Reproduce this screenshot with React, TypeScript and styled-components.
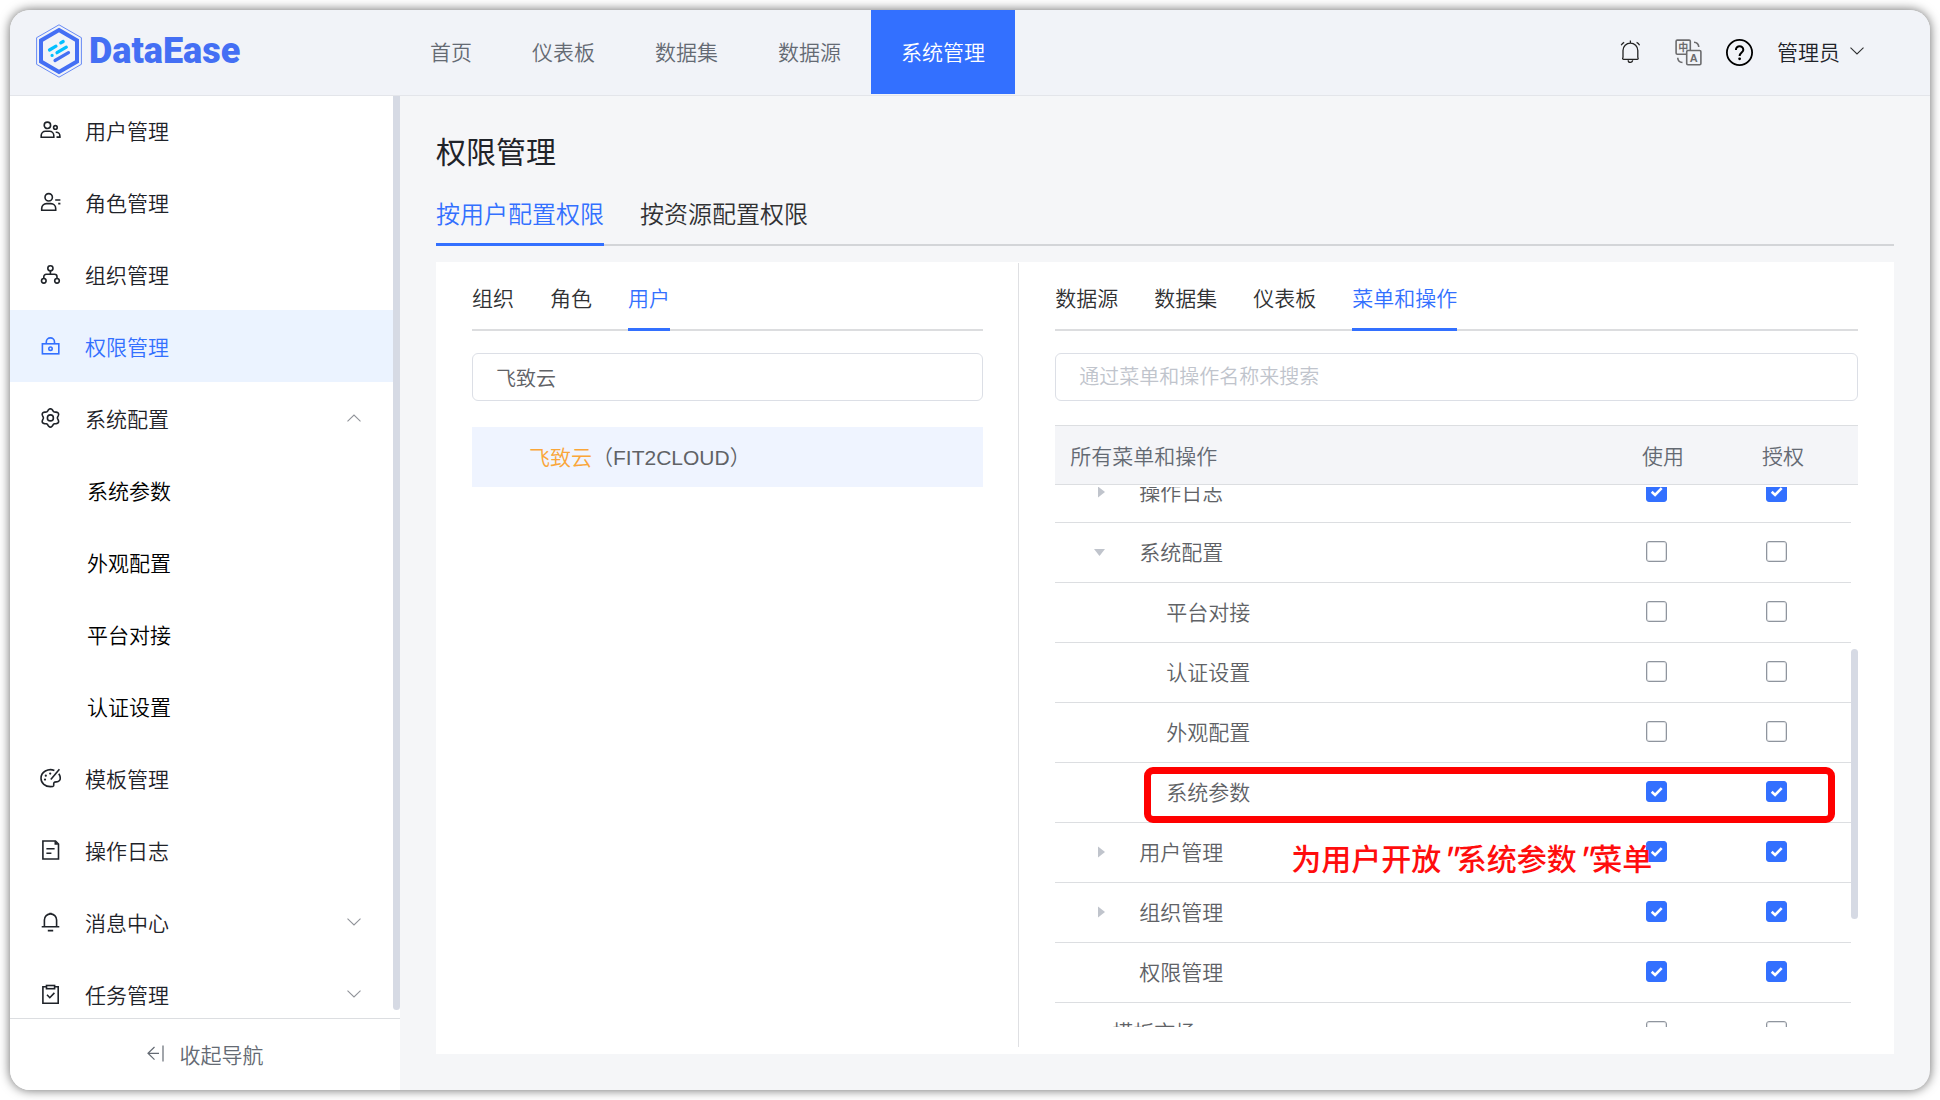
import React, { useLayoutEffect, useRef } from 'react';
import styled, { createGlobalStyle, css } from 'styled-components';

const blue = '#3370ff';

const GlobalStyle = createGlobalStyle`
  *, *::before, *::after { box-sizing: border-box; }
  body {
    margin: 0;
    background: #fff;
    font-family: "Liberation Sans", "Noto Sans CJK SC", sans-serif;
    font-size: 21px;
    font-weight: 350;
    color: #1f2329;
  }
  button, input { font: inherit; }
  button { margin: 0; padding: 0; border: 0; background: none; color: inherit; cursor: pointer; }
  a { color: inherit; text-decoration: none; }
  h1 { margin: 0; }
`;

const Page = styled.div`
  height: 100vh;
  padding: 10px;
`;

const Shell = styled.div`
  display: flex;
  flex-direction: column;
  height: 100%;
  overflow: hidden;
  border-radius: 20px;
  background: #f5f6f8;
  box-shadow: 0 0 11px rgba(0, 0, 0, 0.6);
`;

/* ---------- header ---------- */

const Header = styled.header`
  display: flex;
  flex: none;
  height: 86px;
  padding-bottom: 1px;
  background: #f1f3f8;
  border-bottom: 1px solid #e3e5ea;
`;

const Brand = styled.a`
  display: flex;
  align-items: center;
  gap: 7px;
  width: 390px;
  padding: 0 0 2px 26px;
  color: #446ff4;
  font-family: Roboto, "Liberation Sans", sans-serif;
  font-size: 36px;
  font-weight: 900;
`;

const Nav = styled.nav`
  display: flex;
  flex: 1;
`;

const NavLink = styled.a<{ $active?: boolean }>`
  display: flex;
  align-items: center;
  padding: 0 30px 3px;
  color: ${(p) => (p.$active ? '#fff' : '#646a73')};
  background: ${(p) => (p.$active ? blue : 'transparent')};
`;

const Tools = styled.div`
  display: flex;
  align-items: center;
  gap: 24px;
  padding-right: 66px;
`;

const ToolButton = styled.button<{ $wide?: boolean; $text?: boolean }>`
  display: flex;
  align-items: center;
  gap: 10px;
  padding: 0 ${(p) => (p.$wide ? 10 : 0)}px ${(p) => (p.$text ? 3 : 0)}px;
`;

/* ---------- sidebar ---------- */

const Body = styled.div`
  display: flex;
  flex: 1;
  min-height: 0;
`;

const Sidebar = styled.aside`
  display: flex;
  flex: none;
  flex-direction: column;
  width: 390px;
  background: #fff;
`;

const MenuArea = styled.div`
  position: relative;
  display: flex;
  flex: 1;
  min-height: 0;
`;

const MenuList = styled.nav`
  flex: 1;
  margin-right: 7px;
  overflow-y: auto;
  scrollbar-width: none;
`;

const MenuItem = styled.a<{ $active?: boolean; $sub?: boolean }>`
  display: flex;
  align-items: center;
  gap: 24px;
  height: 72px;
  padding: 0 32px 0 ${(p) => (p.$sub ? 77 : 30)}px;
  color: ${(p) => (p.$active ? blue : p.$sub ? '#000' : '#1f2329')};
  background: ${(p) => (p.$active ? '#ebf3ff' : 'transparent')};
`;

const MenuText = styled.span`
  flex: 1;
`;

const MenuThumb = styled.div`
  position: absolute;
  top: 0;
  right: 0;
  bottom: 8px;
  width: 7px;
  border-radius: 0 0 4px 4px;
  background: #d6dae4;
`;

const Collapse = styled.button`
  display: flex;
  flex: none;
  align-items: center;
  justify-content: center;
  gap: 16px;
  height: 72px;
  padding-bottom: 2px;
  color: #646a73;
  border-top: 1px solid #dcdee1;
`;

/* ---------- content ---------- */

const Main = styled.main`
  display: flex;
  flex: 1;
  flex-direction: column;
  min-width: 0;
  padding: 36px;
`;

const Title = styled.h1`
  margin-bottom: 12px;
  font-size: 30px;
  font-weight: 400;
  line-height: 42px;
`;

const TabList = styled.div<{ $large?: boolean }>`
  display: flex;
  flex: none;
  gap: 36px;
  font-size: ${(p) => (p.$large ? 24 : 21)}px;
  box-shadow: inset 0 -2px ${(p) => (p.$large ? '#d3d5d8' : '#dcdddf')};
`;

const Tab = styled.button<{ $active?: boolean }>`
  height: 60px;
  padding-bottom: 5px;
  color: ${(p) => (p.$active ? blue : '#303133')};
  border-bottom: 3px solid ${(p) => (p.$active ? blue : 'transparent')};
`;

const Panel = styled.section`
  display: flex;
  flex: 1;
  min-height: 0;
  margin-top: 16px;
  padding: 1px 0 7px;
  background: #fff;
`;

const Pane = styled.div<{ $narrow?: boolean }>`
  display: flex;
  flex-direction: column;
  padding: 8px 36px 20px;
  ${(p) =>
    p.$narrow
      ? css`
          width: 40%;
          padding-right: 35px;
          border-right: 1px solid #dfe0e3;
        `
      : css`
          flex: 1;
          min-width: 0;
        `}
`;

const Search = styled.input`
  flex: none;
  width: 100%;
  height: 48px;
  margin: 22px 0 24px;
  padding: 0 23px;
  font-size: 20px;
  color: #606266;
  background: #fff;
  border: 1px solid #dcdfe6;
  border-radius: 6px;
  outline: none;
  &::placeholder { color: #c0c4cc; opacity: 1; }
`;

const UserNode = styled.button`
  flex: none;
  height: 60px;
  margin-top: 2px;
  padding: 0 0 3px 57px;
  text-align: left;
  color: #606266;
  background: #eff4ff;
`;

const Match = styled.span`
  color: #faa639;
`;

/* ---------- permission table ---------- */

const TableArea = styled.div`
  position: relative;
  display: flex;
  flex: 1;
  min-height: 0;
`;

const Table = styled.table`
  display: flex;
  flex: 1;
  flex-direction: column;
  color: #606266;
`;

const Head = styled.thead`
  display: block;
  flex: none;
`;

const HeadRow = styled.tr`
  display: grid;
  grid-template-columns: 1fr 120px 111px;
  align-items: center;
  height: 60px;
  background: #f4f5f8;
  border: solid #dcdee1;
  border-width: 1px 0;
`;

const HeadCell = styled.th`
  padding: 0 0 0 15px;
  font-weight: inherit;
  text-align: left;
  color: #646a73;
`;

const Rows = styled.tbody`
  display: block;
  flex: 1;
  min-height: 0;
  margin: 2px 7px 0 0;
  overflow-y: auto;
  scrollbar-width: none;
`;

const Row = styled.tr`
  position: relative;
  display: grid;
  grid-template-columns: 1fr 120px 104px;
  align-items: center;
  height: 60px;
  padding-bottom: 3px;
  border-bottom: 1px solid #dcdee1;
`;

const NameCell = styled.td<{ $depth: number }>`
  display: flex;
  align-items: center;
  padding: 0 0 0 ${(p) => 8 + p.$depth * 27}px;
`;

const Toggle = styled.span`
  display: flex;
  width: 20px;
  height: 20px;
  margin-right: 29px;
`;

const CheckCell = styled.td`
  padding: 0 0 0 19px;
`;

const CheckLabel = styled.label`
  display: grid;
  width: 21px;
  height: 21px;
  > * { grid-area: 1 / 1; }
  svg { visibility: hidden; pointer-events: none; }
  input:checked + svg { visibility: visible; }
`;

const CheckInput = styled.input`
  appearance: none;
  width: 21px;
  height: 21px;
  margin: 0;
  border: 1px solid #8f959e;
  border-radius: 3px;
  background: #fff;
  box-shadow: inset 0 0 0 1px #dfe1e4;
  &:checked { background: ${blue}; border-color: ${blue}; box-shadow: none; }
`;

const TableThumb = styled.div`
  position: absolute;
  top: 224px;
  right: 0;
  width: 7px;
  height: 270px;
  border-radius: 4px;
  background: #d6dae4;
`;

const Marker = styled.span`
  position: absolute;
  top: 4px;
  left: 89px;
  right: 16px;
  height: 56px;
  z-index: 1;
  border: 7px solid #f00;
  border-radius: 9px;
  pointer-events: none;
`;

const Note = styled.span`
  position: absolute;
  top: 14px;
  left: 236px;
  z-index: 1;
  font-family: "Noto Sans CJK SC", sans-serif;
  font-size: 30px;
  font-weight: 500;
  line-height: 40px;
  white-space: nowrap;
  color: #ff0d0d;
  pointer-events: none;
`;

/* ---------- drawings ---------- */

const Glyph = ({ children }: { children: React.ReactNode }) => (
  <svg width="21" height="21" viewBox="0 0 21 21" fill="none" stroke="currentColor" strokeWidth="1.6" aria-hidden="true">
    {children}
  </svg>
);

const gearPath = () => {
  const points: string[] = [];
  for (let deg = 0; deg < 360; deg += 5) {
    const a = (deg * Math.PI) / 180;
    const r = 8.1 + 1.1 * Math.cos(6 * (a + Math.PI / 2));
    points.push(`${(10.4 + r * Math.cos(a)).toFixed(2)} ${(9.9 + r * Math.sin(a)).toFixed(2)}`);
  }
  return `M${points.join('L')}Z`;
};

const icons: Record<string, React.ReactNode> = {
  users: (
    <Glyph>
      <circle cx="7.4" cy="5.3" r="3.2" />
      <path d="M1.2 17.3V15.6a4.3 4.3 0 0 1 4.3-4.3h4a4.3 4.3 0 0 1 4.3 4.3v1.7z" />
      <circle cx="15.4" cy="7.4" r="1.8" />
      <path d="M15.7 12.3h.6a3.6 3.6 0 0 1 3.6 3.6v1.2h-3.4" />
    </Glyph>
  ),
  role: (
    <Glyph>
      <circle cx="8.7" cy="5.3" r="3.7" />
      <path d="M1.7 18.3V16.4a4.8 4.8 0 0 1 4.8-4.8h4.4a4.8 4.8 0 0 1 4.8 4.8v1.9z" />
      <path d="M15.2 8h5.2M18.2 11.6h2.2" />
    </Glyph>
  ),
  org: (
    <Glyph>
      <circle cx="10.4" cy="4.3" r="2.6" />
      <circle cx="3.8" cy="16.8" r="2.3" />
      <circle cx="17" cy="16.8" r="2.3" />
      <path d="M10.4 7v3.2M3.8 14.5v-1.8a2.4 2.4 0 0 1 2.4-2.4h8.4a2.4 2.4 0 0 1 2.4 2.4v1.8" />
    </Glyph>
  ),
  lock: (
    <Glyph>
      <rect x="2.400" y="7.800" width="16.400" height="10" />
      <path d="M6.300 7.800V6a4.100 4.100 0 0 1 8.200 0v1.800" />
      <circle cx="10.500" cy="12.700" r="1.700" />
    </Glyph>
  ),
  gear: (
    <Glyph>
      <path d={gearPath()} />
      <circle cx="10.400" cy="9.900" r="3" />
    </Glyph>
  ),
  palette: (
    <Glyph>
      <path d="M14.4 2.4A9.5 8.6 0 0 0 1 10.2c0 5 4.300 8.400 9.400 8.400 1.600 0 2.900-.2 3.200-.8.4-1-.3-2.200.5-3.300.9-1.100 2.500-.3 4-.9 1.300-.5 2.200-1.800 2.200-3.400 0-1.600-.6-3.200-1.500-4.400" />
      <path d="M19.400 1.200 10.800 11.500" />
      <g fill="currentColor" stroke="none">
        <circle cx="10.200" cy="5.600" r="1.100" />
        <circle cx="5.800" cy="7.700" r="1.100" />
        <circle cx="5" cy="11.600" r="1.100" />
      </g>
    </Glyph>
  ),
  log: (
    <Glyph>
      <path d="M2.900 1h12.600l3 3v15H2.900z" />
      <path d="M14.500.8v4h4z" fill="currentColor" stroke="none" />
      <path d="M6.400 8.700h8.200M6.400 13.200h5" />
    </Glyph>
  ),
  bell: (
    <Glyph>
      <path d="M4.400 14.500V8a6.100 6.100 0 0 1 12.200 0v6.500M1.700 14.800h17.600M7.800 18.600h5.400M9.300 1.500h2.400" />
    </Glyph>
  ),
  task: (
    <Glyph>
      <path d="M6.500 2.800H2.900v16.400h15.300V2.800h-3.600" />
      <rect x="6.500" y="1.500" width="8.100" height="3.200" />
      <path d="m7 10.800 2.800 2.900 4.600-4.800" />
    </Glyph>
  ),
};

const Chevron = ({ up, color }: { up?: boolean; color: string }) => (
  <svg width="14" height="8" viewBox="0 0 14 8" fill="none" stroke={color} strokeWidth="1.100" aria-hidden="true">
    <path d={up ? 'M.5 7.300 7 1l6.500 6.300' : 'M.5.7 7 7 13.500.7'} />
  </svg>
);

const LogoMark = () => (
  <svg width="46" height="54" viewBox="0 0 46 54" fill="none" aria-hidden="true">
    <path d="M23 .8 45.400 13.700v26.600L23 53.200.6 40.300V13.700z" stroke="#446ff4" strokeWidth=".8" />
    <path d="M23 6 41 16.400v21.200L23 48 5 37.600V16.400z" stroke="#446ff4" strokeWidth="4" />
    <g strokeLinecap="round" strokeWidth="3.200">
      <path d="M13.500 26 20 22.200M24.800 18.900 27.200 17.500M21 28.700 30.300 23.200M16.100 31.300v.1" stroke="#00bfff" />
      <path d="M19 36.500 32.500 28.600" stroke="#446ff4" />
    </g>
  </svg>
);

const AlarmIcon = () => (
  <svg width="21" height="24" viewBox="0 0 21 24" fill="none" stroke="#222" strokeWidth="1.300" aria-hidden="true">
    <path d="M3 17V10.500a7.400 7.400 0 0 1 14.800 0V17c0 .8.400 1 .4 1.600 0 .5-.4.7-.9.7H3.500c-.5 0-.9-.2-.9-.7 0-.6.4-.8.4-1.600zM10.400.5V3M1.200 5.300Q2.300 3.200 4.200 2.400M19.600 5.300Q18.500 3.200 16.600 2.400M8.200 20.200a2.200 2.200 0 0 0 4.400 0" />
  </svg>
);

const LanguageIcon = () => (
  <svg width="27" height="27" viewBox="0 0 27 27" fill="none" stroke="#6b6b6d" strokeWidth="1.600" aria-hidden="true">
    <path d="M11.500 15.300H2.300a1.200 1.200 0 0 1-1.200-1.200V2.300a1.200 1.200 0 0 1 1.200-1.200h11.800a1.200 1.200 0 0 1 1.200 1.200v9.200" />
    <rect x="11.700" y="11.500" width="14.200" height="14.300" rx="1.200" />
    <path d="M19 3.200a5.200 5.200 0 0 1 4.800 4.800M2.700 18.700a5.200 5.200 0 0 0 4.800 4.800" />
    <g fill="#6b6b6d" stroke="none" textAnchor="middle" fontWeight="700">
      <text x="8.200" y="12" fontSize="10">中</text>
      <text x="18.800" y="22.600" fontSize="11">A</text>
    </g>
  </svg>
);

const HelpIcon = () => (
  <svg width="27" height="27" viewBox="0 0 27 27" fill="none" stroke="#000" strokeWidth="1.800" aria-hidden="true">
    <circle cx="13.500" cy="13.500" r="12.600" />
    <path d="M9.900 10.900a3.700 3.700 0 0 1 7.400 0c0 2.400-3.700 2.900-3.700 6" strokeWidth="2" />
    <circle cx="13.600" cy="19.800" r="1.400" fill="#000" stroke="none" />
  </svg>
);

const CollapseIcon = () => (
  <svg width="17" height="17" viewBox="0 0 17 17" fill="none" stroke="#646a73" strokeWidth="1.200" aria-hidden="true">
    <path d="M7.500 2 1 8.300l6.500 6.300M1 8.300h11M16 .5v16" />
  </svg>
);

const Caret = ({ open }: { open: boolean }) => (
  <svg width="20" height="20" viewBox="0 0 20 20" fill="#c0c4cc" aria-hidden="true">
    <path d={open ? 'M4 8h11L9.500 15z' : 'M8 5.500v11l7-5.500z'} />
  </svg>
);

/* ---------- data ---------- */

type Menu = { text: string; icon?: string; arrow?: 'up' | 'down'; active?: boolean };

const menu: Menu[] = [
  { text: '用户管理', icon: 'users' },
  { text: '角色管理', icon: 'role' },
  { text: '组织管理', icon: 'org' },
  { text: '权限管理', icon: 'lock', active: true },
  { text: '系统配置', icon: 'gear', arrow: 'up' },
  { text: '系统参数' },
  { text: '外观配置' },
  { text: '平台对接' },
  { text: '认证设置' },
  { text: '模板管理', icon: 'palette' },
  { text: '操作日志', icon: 'log' },
  { text: '消息中心', icon: 'bell', arrow: 'down' },
  { text: '任务管理', icon: 'task', arrow: 'down' },
];

type Permission = { name: string; depth: number; open?: boolean; on: boolean; marked?: boolean; noted?: boolean };

const permissions: Permission[] = [
  { name: '操作日志', depth: 1, open: false, on: true },
  { name: '系统配置', depth: 1, open: true, on: false },
  { name: '平台对接', depth: 2, on: false },
  { name: '认证设置', depth: 2, on: false },
  { name: '外观配置', depth: 2, on: false },
  { name: '系统参数', depth: 2, on: true, marked: true },
  { name: '用户管理', depth: 1, open: false, on: true, noted: true },
  { name: '组织管理', depth: 1, open: false, on: true },
  { name: '权限管理', depth: 1, on: true },
  { name: '模板市场', depth: 0, on: false },
];

const Check = ({ label, on }: { label: string; on: boolean }) => (
  <CheckLabel>
    <CheckInput type="checkbox" aria-label={label} defaultChecked={on} />
    <svg width="21" height="21" viewBox="0 0 21 21" fill="none" stroke="#fff" strokeWidth="2.600" aria-hidden="true">
      <path d="m5.700 10.700 3.400 3.200 6.600-6.700" />
    </svg>
  </CheckLabel>
);

const Tabs = ({ items, active, large }: { items: string[]; active: string; large?: boolean }) => (
  <TabList role="tablist" $large={large}>
    {items.map((item) => (
      <Tab key={item} type="button" role="tab" aria-selected={item === active} $active={item === active}>
        {item}
      </Tab>
    ))}
  </TabList>
);

export default function App() {
  const menuRef = useRef<HTMLElement>(null);
  const rowsRef = useRef<HTMLTableSectionElement>(null);

  useLayoutEffect(() => {
    if (menuRef.current) menuRef.current.scrollTop = 2;
    if (rowsRef.current) rowsRef.current.scrollTop = 24;
  }, []);

  return (
    <Page>
      <GlobalStyle />
      <Shell>
        <Header>
          <Brand href="#">
            <LogoMark />
            DataEase
          </Brand>
          <Nav>
            {['首页', '仪表板', '数据集', '数据源', '系统管理'].map((item) => (
              <NavLink key={item} href="#" $active={item === '系统管理'}>
                {item}
              </NavLink>
            ))}
          </Nav>
          <Tools>
            <ToolButton type="button" aria-label="消息" $wide>
              <AlarmIcon />
            </ToolButton>
            <ToolButton type="button" aria-label="语言">
              <LanguageIcon />
            </ToolButton>
            <ToolButton type="button" aria-label="帮助">
              <HelpIcon />
            </ToolButton>
            <ToolButton type="button" $text>
              管理员
              <Chevron color="#303133" />
            </ToolButton>
          </Tools>
        </Header>
        <Body>
          <Sidebar>
            <MenuArea>
              <MenuList ref={menuRef}>
                {menu.map((item) => (
                  <MenuItem key={item.text} href="#" $active={item.active} $sub={!item.icon}>
                    {item.icon && icons[item.icon]}
                    <MenuText>{item.text}</MenuText>
                    {item.arrow && <Chevron up={item.arrow === 'up'} color="#909399" />}
                  </MenuItem>
                ))}
              </MenuList>
              <MenuThumb />
            </MenuArea>
            <Collapse type="button">
              <CollapseIcon />
              收起导航
            </Collapse>
          </Sidebar>
          <Main>
            <Title>权限管理</Title>
            <Tabs large items={['按用户配置权限', '按资源配置权限']} active="按用户配置权限" />
            <Panel>
              <Pane $narrow>
                <Tabs items={['组织', '角色', '用户']} active="用户" />
                <Search aria-label="用户" defaultValue="飞致云" />
                <UserNode type="button">
                  <Match>飞致云</Match>（FIT2CLOUD）
                </UserNode>
              </Pane>
              <Pane>
                <Tabs items={['数据源', '数据集', '仪表板', '菜单和操作']} active="菜单和操作" />
                <Search aria-label="菜单和操作" placeholder="通过菜单和操作名称来搜索" />
                <TableArea>
                  <Table>
                    <Head>
                      <HeadRow>
                        <HeadCell scope="col">所有菜单和操作</HeadCell>
                        <HeadCell scope="col">使用</HeadCell>
                        <HeadCell scope="col">授权</HeadCell>
                      </HeadRow>
                    </Head>
                    <Rows ref={rowsRef}>
                      {permissions.map((p) => (
                        <Row key={p.name}>
                          <NameCell $depth={p.depth}>
                            <Toggle>{p.open !== undefined && <Caret open={p.open} />}</Toggle>
                            {p.name}
                            {p.marked && <Marker />}
                            {p.noted && (
                              <Note>
                                为用户开放<i>"</i>系统参数<i>"</i>菜单
                              </Note>
                            )}
                          </NameCell>
                          <CheckCell>
                            <Check label={`${p.name} 使用`} on={p.on} />
                          </CheckCell>
                          <CheckCell>
                            <Check label={`${p.name} 授权`} on={p.on} />
                          </CheckCell>
                        </Row>
                      ))}
                    </Rows>
                  </Table>
                  <TableThumb />
                </TableArea>
              </Pane>
            </Panel>
          </Main>
        </Body>
      </Shell>
    </Page>
  );
}
